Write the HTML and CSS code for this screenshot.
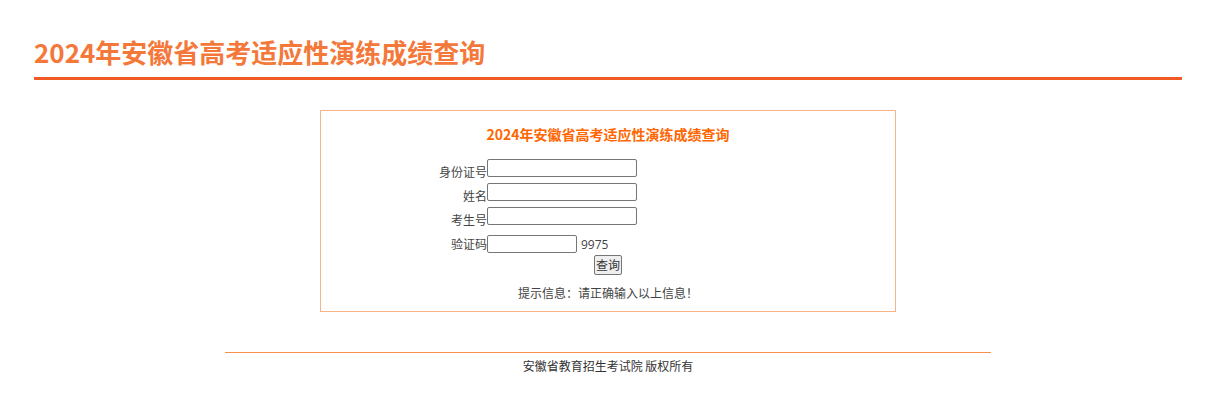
FILE: index.html
```html
<!DOCTYPE html>
<html lang="zh-CN">
<head>
<meta charset="utf-8">
<title>2024年安徽省高考适应性演练成绩查询</title>
<link rel="stylesheet" href="styles.css">
</head>
<body>
<div class="page">
  <h1 class="page-title">2024年安徽省高考适应性演练成绩查询</h1>
  <div class="query-box">
    <div class="query-title">2024年安徽省高考适应性演练成绩查询</div>
    <form class="query-form">
      <div class="row"><label class="lbl">身份证号</label><input class="inp" type="text"></div>
      <div class="row"><label class="lbl">姓名</label><input class="inp" type="text"></div>
      <div class="row"><label class="lbl">考生号</label><input class="inp" type="text"></div>
      <div class="row row-code"><label class="lbl">验证码</label><input class="inp inp-code" type="text"><span class="code">9975</span></div>
      <div class="row-btn"><button class="btn" type="button">查询</button></div>
      <div class="hint">提示信息：请正确输入以上信息！</div>
    </form>
  </div>
  <div class="footer">安徽省教育招生考试院 版权所有</div>
</div>
</body>
</html>
```
FILE: styles.css
```css
html, body {
  margin: 0;
  padding: 0;
  background: #fff;
}
body {
  font-family: "Noto Sans CJK SC", "Noto Sans", sans-serif;
  color: #333;
  font-size: 12px;
}
.page {
  margin: 0 27px 0 34px;
  padding-top: 32px;
}
.page-title {
  margin: 0;
  font-size: 26px;
  line-height: 40px;
  font-weight: bold;
  color: #f4783a;
  padding-bottom: 5px;
  border-bottom: 3px solid #f15a22;
}
.query-box {
  width: 576px;
  margin: 30px auto 0;
  border: 1px solid #f9b28a;
  padding: 13px 0 8px;
  box-sizing: border-box;
}
.query-title {
  text-align: center;
  font-size: 14px;
  line-height: 20px;
  font-weight: bold;
  color: #ff6600;
}
.query-form {
  margin-top: 15px;
}
.row {
  display: flex;
  align-items: flex-end;
  height: 18px;
  margin-bottom: 6px;
}
.row-code {
  margin-top: 10px;
  margin-bottom: 2px;
  align-items: center;
}
.lbl {
  width: 166px;
  text-align: right;
  line-height: 14px;
  color: #444;
  position: relative;
  top: 2px;
}
.row-code .lbl {
  top: 0;
}
.inp {
  width: 150px;
  height: 18px;
  box-sizing: border-box;
  border: 1px solid #767676;
  border-radius: 2px;
  padding: 1px 2px;
  margin: 0;
  font-size: 12px;
  font-family: inherit;
}
.inp-code {
  width: 90px;
}
.code {
  margin-left: 4px;
  font-family: "Open Sans", "Noto Sans", sans-serif;
  color: #444;
}
.row-btn {
  display: flex;
  justify-content: center;
}
.btn {
  width: 28px;
  height: 20px;
  padding: 0;
  font-size: 12px;
  font-family: inherit;
  border: 1px solid #767676;
  border-radius: 2px;
  background: #efefef;
  color: #333;
  line-height: 16px;
}
.hint {
  margin-top: 8px;
  text-align: center;
  line-height: 20px;
  color: #444;
}
.footer {
  width: 766px;
  margin: 40px auto 0;
  border-top: 1px solid #f7914d;
  padding-top: 3px;
  text-align: center;
  line-height: 20px;
  color: #333;
}
```
